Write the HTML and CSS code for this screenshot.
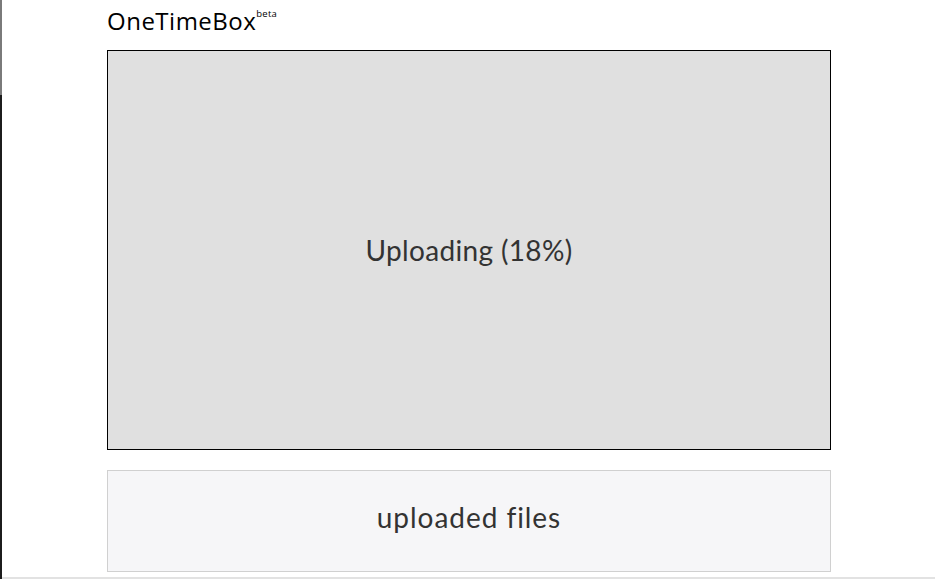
FILE: index.html
```html
<!DOCTYPE html>
<html lang="en">
<head>
<meta charset="utf-8">
<title>OneTimeBox</title>
<link rel="stylesheet" href="styles.css">
</head>
<body>
<div class="page">
  <h1 class="brand">OneTimeBox<sup class="beta">beta</sup></h1>
  <div class="dropzone">
    <span class="status">Uploading (18%)</span>
  </div>
  <div class="files">
    <span class="files-title">uploaded files</span>
  </div>
</div>
</body>
</html>
```

FILE: styles.css
```css
html {
  height: 100%;
  background:
    linear-gradient(#7a7a7a, #7a7a7a) 0 0 / 2px 95px no-repeat,
    linear-gradient(#1c1c1c, #1c1c1c) 0 95px / 2px 100% no-repeat,
    linear-gradient(#e2e2e2, #e2e2e2) 0 577px / 100% 2px no-repeat,
    #ffffff;
}

body {
  margin: 0;
  padding: 0 0 0 3px;
  overflow: hidden;
  height: 100%;
  font-family: "Open Sans", "Liberation Sans", sans-serif;
}

.page {
  width: 724px;
  margin: 0 auto;
  display: flex;
  flex-direction: column;
}

.brand {
  margin: 0;
  padding: 4px 0 0 0;
  height: 50px;
  box-sizing: border-box;
  font-size: 24px;
  font-weight: 400;
  line-height: 34px;
  color: #000;
  letter-spacing: 0.5px;
}

.beta {
  font-size: 9.5px;
  vertical-align: 13px;
  line-height: 0;
  margin-left: 0;
  letter-spacing: 0.2px;
}

.dropzone {
  height: 400px;
  box-sizing: border-box;
  border: 1px solid #000;
  background: #e0e0e0;
  display: flex;
  align-items: center;
  justify-content: center;
}

.status {
  font-family: "Lato", "Liberation Sans", sans-serif;
  font-size: 28px;
  color: #333;
  letter-spacing: 0.35px;
}

.files {
  margin-top: 20px;
  height: 102px;
  box-sizing: border-box;
  border: 1px solid #d0d0d0;
  background: #f6f6f8;
  display: flex;
  align-items: center;
  justify-content: center;
  padding-bottom: 8px;
}

.files-title {
  font-family: "Lato", "Liberation Sans", sans-serif;
  font-size: 28px;
  color: #333;
  letter-spacing: 0.95px;
}
```
